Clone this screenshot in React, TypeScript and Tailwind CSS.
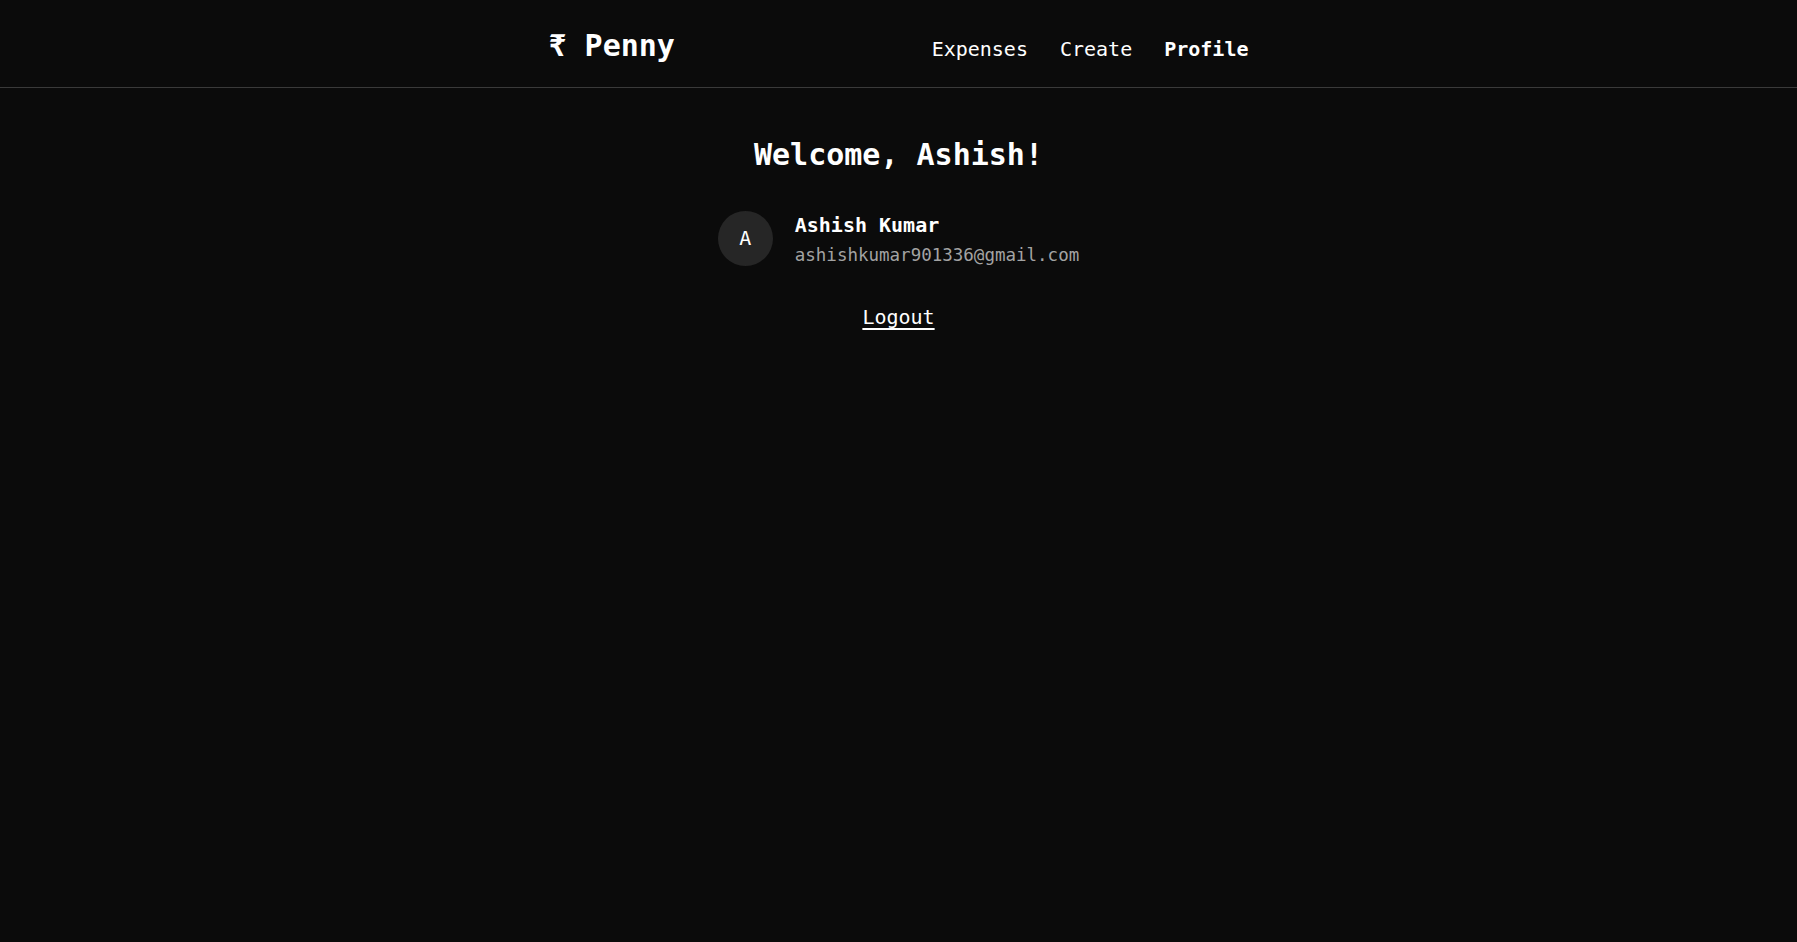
import React from "react";

const links = [
    { label: "Expenses", active: false },
    { label: "Create", active: false },
    { label: "Profile", active: true },
];

export default function App() {
    return (
        <div className="min-h-screen bg-[#0b0b0b] font-['DejaVu_Sans_Mono',monospace] text-[#f5f5f5]">
            {/* ── Top bar ── */}
            <header className="flex h-[88px] items-center border-b border-[#3a3a3a] pt-[5px]">
                <div className="mx-auto flex w-[700px] items-baseline justify-between">
                    <span className="text-[30px] leading-9 font-bold text-white">₹ Penny</span>
                    <nav className="flex items-baseline gap-8">
                        {links.map(({ label, active }) => (
                            <a key={label} href="#" className={`text-[20px] leading-7 text-white ${active ? "font-bold" : "font-normal"}`}>
                                {label}
                            </a>
                        ))}
                    </nav>
                </div>
            </header>

            <main className="flex flex-col items-center pt-[49px]">
                <h1 className="text-[30px] leading-9 font-bold text-white">Welcome, Ashish!</h1>

                <div className="mt-[34px] flex items-center gap-[22px]">
                    <div className="flex h-[55px] w-[55px] items-center justify-center rounded-full bg-[#262626] text-[20px] text-white">
                        A
                    </div>
                    <div className="mt-[4px] flex flex-col">
                        <span className="text-[20px] leading-7 font-bold text-white">Ashish Kumar</span>
                        <span className="mt-0.5 text-[17.5px] leading-7 text-[#a3a3a3]">ashishkumar901336@gmail.com</span>
                    </div>
                </div>

                <button className="mt-[34px] text-[20px] leading-7 text-white underline underline-offset-4">Logout</button>
            </main>
        </div>
    );
}
